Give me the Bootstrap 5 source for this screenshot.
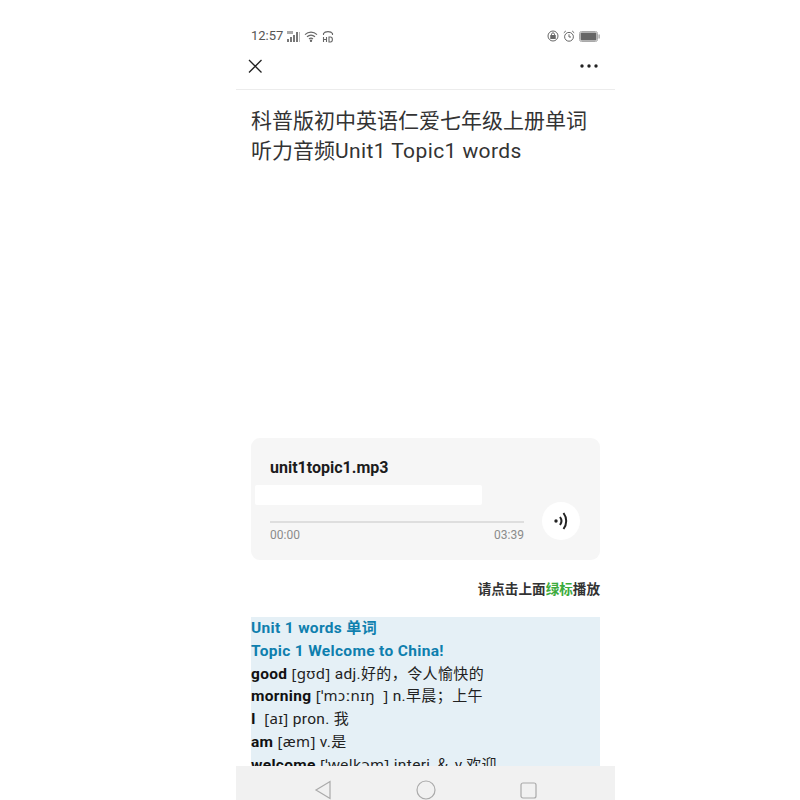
<!DOCTYPE html>
<html lang="zh">
<head>
    <meta charset="UTF-8">
    <meta name="viewport" content="width=device-width, initial-scale=1.0">
    <title>Unit1 Topic1 words</title>
    <link rel="stylesheet" href="https://cdn.jsdelivr.net/npm/bootstrap@5.3.0/dist/css/bootstrap.min.css">
    <script src="https://cdn.jsdelivr.net/npm/bootstrap@5.3.0/dist/js/bootstrap.bundle.min.js" defer></script>
    <style>
        body {
            font-family: Roboto, "Noto Sans CJK SC", sans-serif;
            color: #222;
            background: #fff;
        }
        .phone {
            position: relative;
            width: 379px;
            height: 800px;
            margin-left: 236px;
            overflow: hidden;
        }
        .status-bar {
            height: 51px;
            padding: 23px 15px 2px;
            font-size: 13px;
            line-height: 20px;
            color: #555;
        }
        .top-bar {
            height: 39px;
            padding: 0 17px 8px 11px;
            border-bottom: 1px solid #ececec;
        }
        .page-title {
            margin: 17px 15px 0;
            font-size: 21px;
            line-height: 29.5px;
            font-weight: 400;
            color: #333;
        }
        .title-latin { letter-spacing: .4px; }
        .audio-box {
            height: 122px;
            margin: 272px 15px 0;
            padding: 19px 19px 0;
            background: #f6f6f6;
            border-radius: 9px;
            position: relative;
        }
        .audio-name {
            font-size: 16px;
            line-height: 22px;
            font-weight: 700;
            color: #1c1c1c;
        }
        .smear {
            position: absolute;
            left: 4px;
            top: 47px;
            width: 227px;
            height: 20px;
            background: #fff;
            border-radius: 2px;
        }
        .audio-track {
            width: 254px;
            margin-top: 42px;
            border-top: 2px solid #dedede;
            padding-top: 4px;
            font-size: 12px;
            line-height: 16px;
            color: #8b8b8b;
        }
        .sound-btn {
            position: absolute;
            right: 20px;
            top: 64px;
            width: 38px;
            height: 38px;
            background: #fff;
            border-radius: 50%;
        }
        .play-tip {
            margin: 19px 15px 0;
            font-size: 13.6px;
            line-height: 20px;
            font-weight: 700;
            color: #333;
        }
        .play-tip span { color: #3cab3c; }
        .words-box {
            margin: 18px 15px 0;
            background: #e5f0f6;
            font-size: 15.5px;
            line-height: 22.8px;
            letter-spacing: .33px;
            color: #222;
        }
        .words-box b { font-weight: 700; color: #111; }
        .words-head { color: #0f7fae; font-weight: 700; }
        .ipa { font-family: "Noto Sans", Roboto, sans-serif; font-size: 15px; line-height: 0; letter-spacing: .3px; }
        .zh { font-size: 15px; line-height: 0; letter-spacing: .4px; }
        .nav-keys {
            position: absolute;
            left: 0;
            right: 0;
            bottom: 0;
            height: 34px;
            padding-top: 14px;
            gap: 84px;
            background: #f1f1f1;
        }
    </style>
</head>
<body>
    <div class="phone">
        <!-- Status bar -->
        <div class="status-bar d-flex justify-content-between">
            <div class="d-flex align-items-center gap-1">
                <span>12:57</span>
                <svg width="13" height="12" viewBox="0 0 13 12" fill="#777"><rect x="0" y="9" width="2" height="3"/><rect x="3" y="7" width="2" height="5"/><rect x="6" y="5" width="2" height="7"/><rect x="9" y="2" width="2" height="10"/><rect x="12" y="2" width="1" height="10" fill="#bbb"/><rect x="0" y="1" width="6" height="3" fill="#aaa"/></svg>
                <svg width="14" height="11" viewBox="0 0 14 11" fill="none" stroke="#666" stroke-width="1.2"><path d="M1 3.6C4.5.4 9.5.4 13 3.6"/><path d="M3 5.8c2.4-2.1 5.6-2.1 8 0"/><path d="M5 8c1.2-1 2.8-1 4 0"/><circle cx="7" cy="9.8" r=".6" fill="#666"/></svg>
                <svg width="12" height="13" viewBox="0 0 12 13" fill="none" stroke="#666" stroke-width="1.1"><path d="M1.5 5V3.5C3 1 9 1 10.500 3.500V5"/><path d="M1.500 7v5M1.500 9.500h3M4.500 7v5M7 7v5h1.500c2.500 0 2.500-5 0-5H7z"/></svg>
            </div>
            <div class="d-flex align-items-center gap-1">
                <svg width="12" height="12" viewBox="0 0 12 12" fill="none" stroke="#666" stroke-width="1"><circle cx="6" cy="6" r="5"/><rect x="3.800" y="5.500" width="4.400" height="3" fill="#666"/><path d="M4.500 5.500V4.200c0-1.800 3-1.800 3 0v1.300"/></svg>
                <svg width="12" height="12" viewBox="0 0 12 12" fill="none" stroke="#666" stroke-width="1"><circle cx="6" cy="6.800" r="4.400"/><path d="M6 4.300v2.700h2M.8 2.800 2.800 1M11.200 2.800 9.200 1"/></svg>
                <svg width="21" height="11" viewBox="0 0 21 11"><rect x=".5" y=".5" width="18" height="10" rx="2" fill="#fff" stroke="#aaa"/><rect x="1.500" y="1.500" width="16" height="8" rx="1" fill="#666"/><rect x="19.500" y="3.500" width="1.200" height="4" fill="#999"/></svg>
            </div>
        </div>

        <!-- Top bar -->
        <div class="top-bar d-flex justify-content-between align-items-center">
            <svg width="16" height="16" viewBox="0 0 16 16" stroke="#222" stroke-width="1.300" fill="none"><path d="M2 2l12.500 12.500M14.500 2 2 14.500"/></svg>
            <svg width="18" height="4" viewBox="0 0 18 4" fill="#222"><circle cx="2" cy="2" r="1.700"/><circle cx="9" cy="2" r="1.700"/><circle cx="16" cy="2" r="1.700"/></svg>
        </div>

        <h1 class="page-title">
            <span class="d-block">科普版初中英语仁爱七年级上册单词</span>
            <span class="d-block">听力音频<span class="title-latin">Unit1 Topic1 words</span></span>
        </h1>

        <!-- Audio card -->
        <div class="audio-box">
            <div class="audio-name">unit1topic1.mp3</div>
            <div class="smear"></div>
            <div class="audio-track d-flex justify-content-between">
                <span>00:00</span>
                <span>03:39</span>
            </div>
            <div class="sound-btn d-flex align-items-center justify-content-center">
                <svg width="16" height="20" viewBox="0 0 16 20" fill="none" stroke="#222" stroke-width="2"><circle cx="3" cy="10" r="1.700" fill="#222" stroke="none"/><path d="M7 6c1.800 2.400 1.800 5.600 0 8"/><path d="M10.500 2c3.600 4.800 3.600 11.200 0 16"/></svg>
            </div>
        </div>

        <p class="play-tip text-end">请点击上面<span>绿标</span>播放</p>

        <!-- Word list -->
        <div class="words-box">
            <div class="words-head">Unit 1 words <span class="zh">单词</span></div>
            <div class="words-head">Topic 1 Welcome to China!</div>
            <div><b>good</b> <span class="ipa">[gʊd]</span> adj.<span class="zh">好的，令人愉快的</span></div>
            <div><b>morning</b> <span class="ipa">[ˈmɔːnɪŋ&nbsp; ]</span> n.<span class="zh">早晨；上午</span></div>
            <div><b>I</b>&nbsp; <span class="ipa">[aɪ]</span> pron. <span class="zh">我</span></div>
            <div><b>am</b> <span class="ipa">[æm]</span> v.<span class="zh">是</span></div>
            <div><b>welcome</b> <span class="ipa">[ˈwelkəm]</span> interj.＆ v.<span class="zh">欢迎</span></div>
        </div>

        <!-- Android keys -->
        <div class="nav-keys d-flex justify-content-center align-items-center">
            <svg width="18" height="20" viewBox="0 0 18 20" fill="none" stroke="#aaa" stroke-width="1.200"><path d="M16 1.500v17L2 10z"/></svg>
            <svg width="20" height="20" viewBox="0 0 20 20" fill="none" stroke="#aaa" stroke-width="1.200"><circle cx="10" cy="10" r="9"/></svg>
            <svg width="17" height="17" viewBox="0 0 17 17" fill="none" stroke="#aaa" stroke-width="1.200"><rect x="1" y="1" width="15" height="15" rx="2"/></svg>
        </div>
    </div>
</body>
</html>
